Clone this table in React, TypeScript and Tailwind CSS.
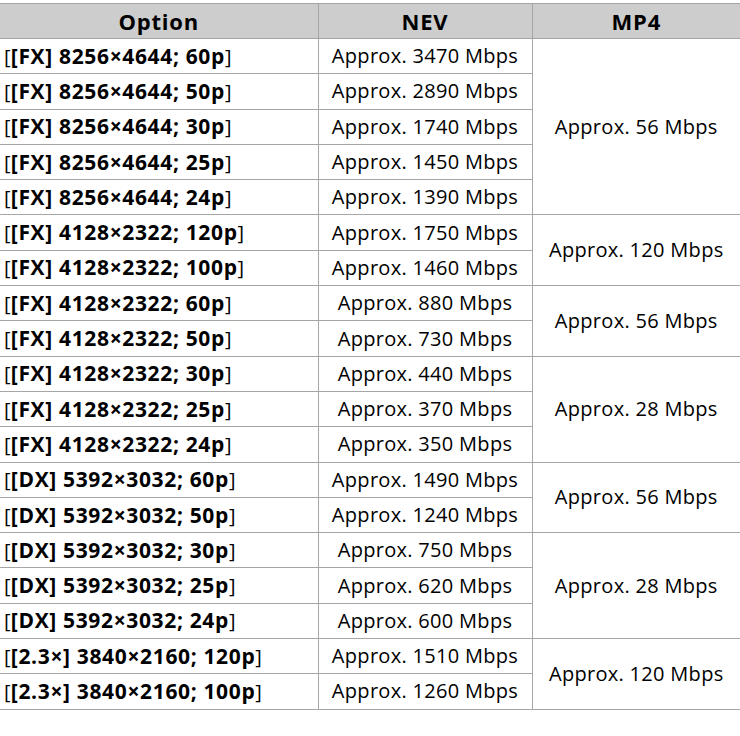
const rows: [string, string, string][] = [
  ['[FX]', '8256×4644; 60p', 'Approx. 3470 Mbps'],
  ['[FX]', '8256×4644; 50p', 'Approx. 2890 Mbps'],
  ['[FX]', '8256×4644; 30p', 'Approx. 1740 Mbps'],
  ['[FX]', '8256×4644; 25p', 'Approx. 1450 Mbps'],
  ['[FX]', '8256×4644; 24p', 'Approx. 1390 Mbps'],
  ['[FX]', '4128×2322; 120p', 'Approx. 1750 Mbps'],
  ['[FX]', '4128×2322; 100p', 'Approx. 1460 Mbps'],
  ['[FX]', '4128×2322; 60p', 'Approx. 880 Mbps'],
  ['[FX]', '4128×2322; 50p', 'Approx. 730 Mbps'],
  ['[FX]', '4128×2322; 30p', 'Approx. 440 Mbps'],
  ['[FX]', '4128×2322; 25p', 'Approx. 370 Mbps'],
  ['[FX]', '4128×2322; 24p', 'Approx. 350 Mbps'],
  ['[DX]', '5392×3032; 60p', 'Approx. 1490 Mbps'],
  ['[DX]', '5392×3032; 50p', 'Approx. 1240 Mbps'],
  ['[DX]', '5392×3032; 30p', 'Approx. 750 Mbps'],
  ['[DX]', '5392×3032; 25p', 'Approx. 620 Mbps'],
  ['[DX]', '5392×3032; 24p', 'Approx. 600 Mbps'],
  ['[2.3×]', '3840×2160; 120p', 'Approx. 1510 Mbps'],
  ['[2.3×]', '3840×2160; 100p', 'Approx. 1260 Mbps'],
];

// MP4 column: starting row index -> [rowSpan, text]
const mp4: Record<number, [number, string]> = {
  0: [5, 'Approx. 56 Mbps'],
  5: [2, 'Approx. 120 Mbps'],
  7: [2, 'Approx. 56 Mbps'],
  9: [3, 'Approx. 28 Mbps'],
  12: [2, 'Approx. 56 Mbps'],
  14: [3, 'Approx. 28 Mbps'],
  17: [2, 'Approx. 120 Mbps'],
};

export default function App() {
  return (
    <div className="w-[740px] h-[736px] bg-white pt-[3px] font-['Open_Sans',sans-serif] text-black">
      <table className="w-full border-collapse table-fixed text-[20px] tracking-[0.3px] leading-none">
        <colgroup>
          <col className="w-[318px]" />
          <col className="w-[214px]" />
          <col />
        </colgroup>
        <thead>
          <tr className="bg-[#cdcdcd] h-[35px] text-[22px] tracking-[0.8px]">
            <th className="border-t border-b border-r border-[#a6a6a6] font-bold">Option</th>
            <th className="border-t border-b border-r border-[#a6a6a6] font-bold">NEV</th>
            <th className="border-t border-b border-[#a6a6a6] font-bold">MP4</th>
          </tr>
        </thead>
        <tbody>
          {rows.map(([mode, spec, nev], i) => (
            <tr key={i} className="h-[35.3px]">
              <td className="border-b border-r border-[#a6a6a6] pl-[4px] whitespace-nowrap">
                [<span className="font-bold text-[21px] tracking-[0.65px]">{mode} {spec}</span>]
              </td>
              <td className="border-b border-r border-[#a6a6a6] text-center whitespace-nowrap">{nev}</td>
              {mp4[i] && (
                <td rowSpan={mp4[i][0]} className="border-b border-[#a6a6a6] text-center whitespace-nowrap">
                  {mp4[i][1]}
                </td>
              )}
            </tr>
          ))}
        </tbody>
      </table>
    </div>
  );
}
